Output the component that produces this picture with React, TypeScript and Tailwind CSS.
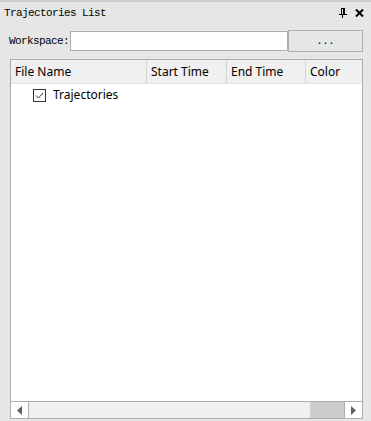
import React from "react";

const mono = { fontFamily: '"Liberation Mono", "DejaVu Sans Mono", monospace' };
const sans = { fontFamily: '"Noto Sans", "Open Sans", "Noto Sans CJK SC", sans-serif' };

const columns = [
  { name: "File Name", width: "w-[136px]" },
  { name: "Start Time", width: "w-[80px]" },
  { name: "End Time", width: "w-[79px]" },
  { name: "Color", width: "flex-1" },
];

export default function App() {
  return (
    <div className="w-[371px] h-[421px] bg-[#e6e6e6] border-t-2 border-[#cccccc] flex flex-col">
      {/* title bar */}
      <div className="h-[22px] flex items-center pl-[4px] pr-[7px]">
        <span className="text-[11px] tracking-[-0.6px] text-black leading-none" style={mono}>
          Trajectories List
        </span>
        <div className="ml-auto flex items-center gap-[8px]">
          <svg width="8" height="10" viewBox="0 0 8 10">
            <rect x="2" y="0" width="4" height="1" fill="#000" />
            <rect x="2" y="1" width="1" height="5" fill="#000" />
            <rect x="4" y="1" width="2" height="5" fill="#000" />
            <rect x="0" y="6" width="8" height="1" fill="#000" />
            <rect x="3" y="7" width="1" height="3" fill="#000" />
          </svg>
          <svg width="9" height="8" viewBox="0 0 9 8">
            <path d="M1 0.5 L8 7.5 M8 0.5 L1 7.5" stroke="#000" strokeWidth="2" />
          </svg>
        </div>
      </div>

      {/* workspace row */}
      <div className="mt-[6px] h-[22px] flex items-center pl-[9px]">
        <span className="text-[11px] tracking-[-0.6px] text-black w-[61px]" style={mono}>
          Workspace:
        </span>
        <div className="w-[218px] h-[20px] bg-white border border-[#adadad]" />
        <button className="w-[75px] h-[22px] bg-[#e6e6e6] border border-[#adadad] flex items-center justify-center text-[10px] text-black" style={mono}>
          ...
        </button>
      </div>

      {/* table */}
      <div className="mt-[7px] mb-[2px] ml-[10px] w-[353px] flex-1 bg-white border border-[#adadad] flex flex-col">
        <div className="h-[24px] flex bg-[#f0f0f0] border-b border-[#e5e5e5]">
          {columns.map((c, i) => (
            <div
              key={c.name}
              className={`${c.width} h-full flex items-center pl-[4px] pt-[1px] text-[12px] text-black ${i < 3 ? "border-r border-[#d5d5d5]" : ""}`}
              style={sans}
            >
              {c.name}
            </div>
          ))}
        </div>

        <div className="flex-1">
          <div className="h-[22px] flex items-center pl-[22px]">
            <div className="w-[13px] h-[13px] border border-[#333333] bg-white flex items-center justify-center">
              <svg width="11" height="11" viewBox="0 0 11 11">
                <path d="M2 5.5 L4.5 8 L9 3" stroke="#333333" strokeWidth="1" fill="none" />
              </svg>
            </div>
            <span className="ml-[7px] text-[12px] text-black" style={sans}>
              Trajectories
            </span>
          </div>
        </div>

        {/* horizontal scrollbar */}
        <div className="h-[17px] flex border-t border-[#adadad] bg-[#f0f0f0]">
          <div className="w-[18px] h-full bg-white border-r border-[#adadad] flex items-center justify-center">
            <svg width="5" height="9" viewBox="0 0 5 9">
              <path d="M5 0 L0 4.5 L5 9 Z" fill="#606060" />
            </svg>
          </div>
          <div className="flex-1" />
          <div className="w-[34px] h-full bg-[#cdcdcd]" />
          <div className="w-[18px] h-full bg-white border-l border-[#adadad] flex items-center justify-center">
            <svg width="5" height="9" viewBox="0 0 5 9">
              <path d="M0 0 L5 4.5 L0 9 Z" fill="#606060" />
            </svg>
          </div>
        </div>
      </div>
    </div>
  );
}
